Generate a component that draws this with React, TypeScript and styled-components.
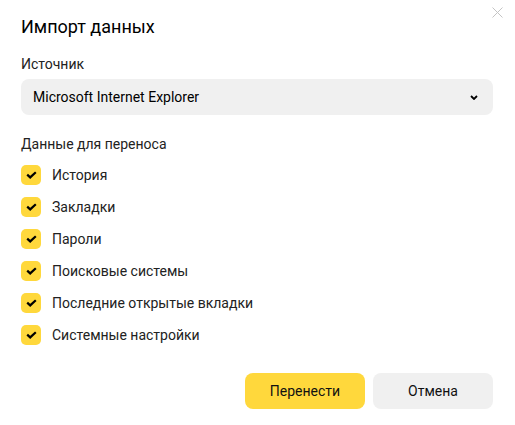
import React from "react";
import styled, { createGlobalStyle } from "styled-components";

const Global = createGlobalStyle`
  html, body { margin: 0; padding: 0; background: #fff; }
  body { font-family: Roboto, "Noto Sans", sans-serif; color: #000; }
`;

const Dialog = styled.div`
  position: relative;
  width: 515px;
  height: 425px;
  box-sizing: border-box;
  padding: 15px 22px 16px 21px;
  display: flex;
  flex-direction: column;
`;

const Close = styled.button`
  position: absolute;
  top: 7px;
  right: 12px;
  width: 11px;
  height: 11px;
  padding: 0;
  border: none;
  background: none;
  display: flex;
`;

const Title = styled.h1`
  margin: 0;
  font-size: 18px;
  line-height: 24px;
  font-weight: 400;
  color: #000;
`;

const Label = styled.div<{ $top: number }>`
  font-size: 14px;
  line-height: 18px;
  color: #222;
  margin-top: ${(p) => p.$top}px;
`;

const Select = styled.div`
  margin-top: 6px;
  height: 36px;
  border-radius: 8px;
  background: #f0f0f0;
  display: flex;
  align-items: center;
  justify-content: space-between;
  padding: 0 15px 0 12px;
  font-size: 14px;
  color: #000;
`;

const List = styled.div`
  margin-top: 12px;
  display: flex;
  flex-direction: column;
  gap: 12px;
`;

const Row = styled.label`
  display: flex;
  align-items: center;
  gap: 11px;
  font-size: 14px;
  line-height: 20px;
  color: #222;
`;

const Box = styled.span`
  width: 20px;
  height: 20px;
  border-radius: 5px;
  background: #ffd83c;
  display: flex;
  align-items: center;
  justify-content: center;
`;

const Footer = styled.div`
  margin-top: auto;
  display: flex;
  justify-content: flex-end;
  gap: 8px;
`;

const Button = styled.button<{ $primary?: boolean }>`
  width: 120px;
  height: 36px;
  border: none;
  border-radius: 8px;
  font-family: inherit;
  font-size: 14px;
  color: #111;
  background: ${(p) => (p.$primary ? "#ffd83c" : "#f0f0f0")};
`;

const items = [
  "История",
  "Закладки",
  "Пароли",
  "Поисковые системы",
  "Последние открытые вкладки",
  "Системные настройки",
];

export default function App() {
  return (
    <>
      <Global />
      <Dialog>
        <Close aria-label="Закрыть">
          <svg width="11" height="11" viewBox="0 0 11 11">
            <path d="M0.5 0.5L10.5 10.5M10.5 0.5L0.5 10.5" stroke="#c4c4c4" strokeWidth="1" />
          </svg>
        </Close>
        <Title>Импорт данных</Title>
        <Label $top={16}>Источник</Label>
        <Select>
          <span>Microsoft Internet Explorer</span>
          <svg width="8" height="5" viewBox="0 0 8 5">
            <path d="M1 1L4 4L7 1" stroke="#000" strokeWidth="1.8" fill="none" />
          </svg>
        </Select>
        <Label $top={20}>Данные для переноса</Label>
        <List>
          {items.map((t) => (
            <Row key={t}>
              <Box>
                <svg width="11" height="8" viewBox="0 0 11 8">
                  <path d="M1.2 3.6L4.2 6.4L9.8 1.2" stroke="#000" strokeWidth="2.2" fill="none" />
                </svg>
              </Box>
              {t}
            </Row>
          ))}
        </List>
        <Footer>
          <Button $primary>Перенести</Button>
          <Button>Отмена</Button>
        </Footer>
      </Dialog>
    </>
  );
}
